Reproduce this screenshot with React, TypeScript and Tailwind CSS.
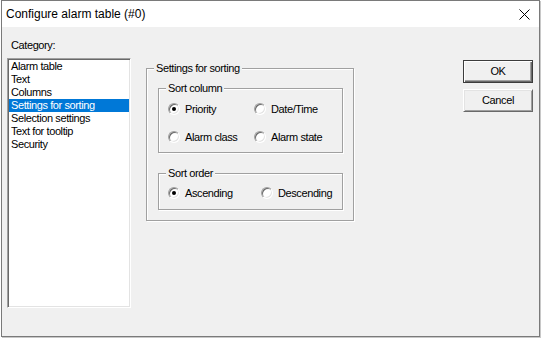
import React from 'react';

const categories = [
  'Alarm table',
  'Text',
  'Columns',
  'Settings for sorting',
  'Selection settings',
  'Text for tooltip',
  'Security',
];

const font = { fontFamily: '"Liberation Sans", Arial, sans-serif' };

function Radio({ label, checked, width }: { label: string; checked?: boolean; width?: string }) {
  return (
    <div className={`flex h-[16px] items-center ${width ?? ''}`}>
      <span className="flex h-[12px] w-[12px] shrink-0 items-center justify-center rounded-full border border-t-[#a0a0a0] border-l-[#a0a0a0] border-r-white border-b-white bg-white shadow-[inset_1px_1px_0_#696969,inset_-1px_-1px_0_#e3e3e3]">
        {checked && <span className="h-[4px] w-[4px] rounded-full bg-black" />}
      </span>
      <span className="ml-[5px] leading-[13px]">{label}</span>
    </div>
  );
}

function Group({
  title,
  className,
  inner,
  children,
}: {
  title: string;
  className: string;
  inner: string;
  children: React.ReactNode;
}) {
  return (
    <fieldset
      className={`m-0 min-w-0 border border-[#a0a0a0] p-0 shadow-[1px_1px_0_#fff,inset_1px_1px_0_#fff] ${className}`}
    >
      <legend className="ml-[7px] bg-[#f0f0f0] px-[2px] leading-[13px]">{title}</legend>
      <div className={inner}>{children}</div>
    </fieldset>
  );
}

export default function App() {
  return (
    <div className="h-[338px] w-[541px] bg-white text-[11px] text-black" style={font}>
      <div className="ml-[1px] flex h-[337px] w-[539px] flex-col border border-[#7a7a7a] shadow-[1px_1px_0_#c8c8c8]">
        {/* title bar */}
        <div className="flex h-[26px] shrink-0 items-center justify-between bg-white pl-[4px] pr-[9px]">
          <span className="text-[12px]">Configure alarm table (#0)</span>
          <svg width="11" height="11" viewBox="0 0 11 11">
            <path d="M0.5 0.5 L10.5 10.5 M10.5 0.5 L0.5 10.5" stroke="#000" strokeWidth="1" />
          </svg>
        </div>

        {/* body */}
        <div className="flex flex-1 bg-[#f0f0f0] tracking-[-0.4px]">
          <div className="pl-[5px] pt-[12px]">
            <div className="pl-[4px] leading-[13px]">Category:</div>
            <div className="mt-[6px] h-[250px] w-[124px] border border-t-[#a0a0a0] border-l-[#a0a0a0] border-r-white border-b-white bg-white p-[1px] shadow-[inset_1px_1px_0_#696969,inset_-1px_-1px_0_#e3e3e3]">
              {categories.map((c) => (
                <div
                  key={c}
                  className={`h-[13px] pl-[2px] leading-[13px] whitespace-nowrap ${
                    c === 'Settings for sorting' ? 'bg-[#0078d7] text-white' : ''
                  }`}
                >
                  {c}
                </div>
              ))}
            </div>
          </div>

          <div className="ml-[15px] mt-[35px]">
            <Group title="Settings for sorting" className="h-[159px] w-[208px]" inner="pl-[11px] pt-[7px]">
              <Group title="Sort column" className="h-[71px] w-[185px]" inner="pl-[9px] pt-[6px]">
                <div className="flex">
                  <Radio label="Priority" checked width="w-[86px]" />
                  <Radio label="Date/Time" />
                </div>
                <div className="mt-[12px] flex">
                  <Radio label="Alarm class" width="w-[86px]" />
                  <Radio label="Alarm state" />
                </div>
              </Group>
              <Group title="Sort order" className="mt-[14px] h-[43px] w-[185px]" inner="pl-[9px] pt-[5px]">
                <div className="flex">
                  <Radio label="Ascending" checked width="w-[93px]" />
                  <Radio label="Descending" />
                </div>
              </Group>
            </Group>
          </div>

          <div className="ml-auto mr-[6px] mt-[33px] flex flex-col gap-[6px]">
            <button className="flex h-[23px] w-[70px] items-center justify-center border border-[#3c3c3c] bg-[#f0f0f0] shadow-[inset_1px_1px_0_#fff,inset_-1px_-1px_0_#696969,inset_-2px_-2px_0_#a0a0a0]">
              OK
            </button>
            <button className="flex h-[23px] w-[70px] items-center justify-center border border-t-white border-l-white border-r-[#696969] border-b-[#696969] bg-[#f0f0f0] shadow-[inset_1px_1px_0_#e3e3e3,inset_-1px_-1px_0_#a0a0a0]">
              Cancel
            </button>
          </div>
        </div>
      </div>
    </div>
  );
}
